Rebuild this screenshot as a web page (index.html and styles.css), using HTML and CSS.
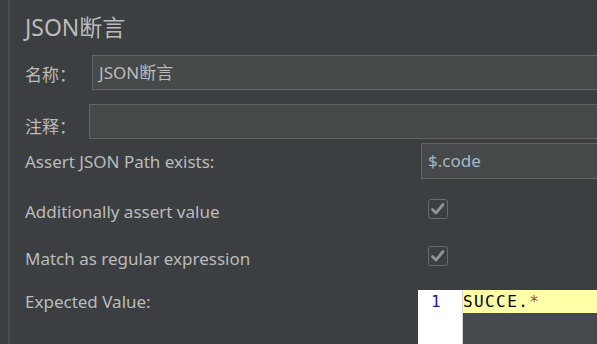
FILE: index.html
```html
<!DOCTYPE html>
<html lang="zh-CN">
<head>
    <meta charset="UTF-8">
    <title>JSON断言</title>
    <link rel="stylesheet" href="styles.css">
</head>
<body>
    <div class="panel">
        <h1 class="title">JSON断言</h1>

        <!-- 名称 / 注释 -->
        <div class="field name-row">
            <span class="label">名称：</span>
            <div class="input">JSON断言</div>
        </div>
        <div class="field note-row">
            <span class="label">注释：</span>
            <div class="input"></div>
        </div>

        <!-- 断言设置 -->
        <div class="options">
            <div class="row path-row">
                <span class="label">Assert JSON Path exists:</span>
                <div class="input path-input">$.code</div>
            </div>
            <div class="row check-row">
                <span class="label">Additionally assert value</span>
                <span class="checkbox">
                    <svg width="18" height="18" viewBox="0 0 18 18"><path d="M3.5 9.5 L7 13 L14 4.5" fill="none" stroke="#909395" stroke-width="2.8" stroke-linecap="round" stroke-linejoin="round"/></svg>
                </span>
            </div>
            <div class="row check-row second">
                <span class="label">Match as regular expression</span>
                <span class="checkbox">
                    <svg width="18" height="18" viewBox="0 0 18 18"><path d="M3.5 9.5 L7 13 L14 4.5" fill="none" stroke="#909395" stroke-width="2.8" stroke-linecap="round" stroke-linejoin="round"/></svg>
                </span>
            </div>
            <div class="row expected-row">
                <span class="label">Expected Value:</span>
                <div class="editor">
                    <div class="gutter">1</div>
                    <div class="lines">
                        <div class="line current">SUCCE.<span class="op">*</span></div>
                    </div>
                </div>
            </div>
        </div>
    </div>
</body>
</html>
```

FILE: styles.css
```css
* {
    margin: 0;
    padding: 0;
    box-sizing: border-box;
}

html, body {
    height: 100%;
}

body {
    background: #3c3f41;
    color: #bbbbbb;
    font-family: "Noto Sans", "Noto Sans CJK SC", sans-serif;
    font-size: 17px;
    overflow: hidden;
}

.panel {
    margin-left: 8px;
    height: 100%;
    border-left: 2px solid #4a4d4f;
    padding-left: 15px;
}

.title {
    font-size: 23px;
    font-weight: normal;
    line-height: 30px;
    padding-top: 12px;
}

.field {
    display: flex;
    align-items: center;
    height: 35px;
}

.name-row {
    margin-top: 13px;
}

.name-row .label {
    width: 67px;
    padding-top: 2px;
}

.note-row {
    margin-top: 14px;
}

.note-row .label {
    width: 64px;
    padding-top: 8px;
}

.input {
    flex: 1;
    height: 35px;
    margin-right: -4px;
    background: #45494a;
    border: 1px solid #646464;
    padding-left: 6px;
    line-height: 33px;
    color: #bbbbbb;
}

/* 断言设置 */
.options {
    margin-top: 4px;
}

.row {
    display: flex;
    align-items: center;
}

.row .label {
    width: 396px;
}

.path-row {
    height: 36px;
}

.path-input {
    height: 36px;
    line-height: 34px;
    color: #a9b7c6;
}

.check-row {
    height: 60px;
}

.check-row.second {
    height: 34px;
}

.check-row .label {
    padding-top: 5px;
    width: 403px;
}

.checkbox {
    width: 20px;
    height: 20px;
    border: 1px solid #676a6c;
    border-radius: 3px;
    display: flex;
    align-items: center;
    justify-content: center;
}

.expected-row {
    margin-top: 17px;
    align-items: flex-start;
}

.expected-row .label {
    width: 393px;
    padding-top: 0;
}

.editor {
    flex: 1;
    display: flex;
    height: 60px;
    font-family: "DejaVu Sans Mono", monospace;
    font-size: 16px;
    letter-spacing: 1.4px;
}

.gutter {
    width: 45px;
    background: #ffffff;
    border-right: 1px solid #d4d4d4;
    color: #1c1c9c;
    text-align: right;
    padding-right: 20px;
    line-height: 23px;
}

.lines {
    flex: 1;
    background: #46494b;
}

.line {
    height: 23px;
    line-height: 23px;
    color: #000000;
}

.line.current {
    background: #ffffa8;
}

.op {
    color: #a0522d;
}
```
